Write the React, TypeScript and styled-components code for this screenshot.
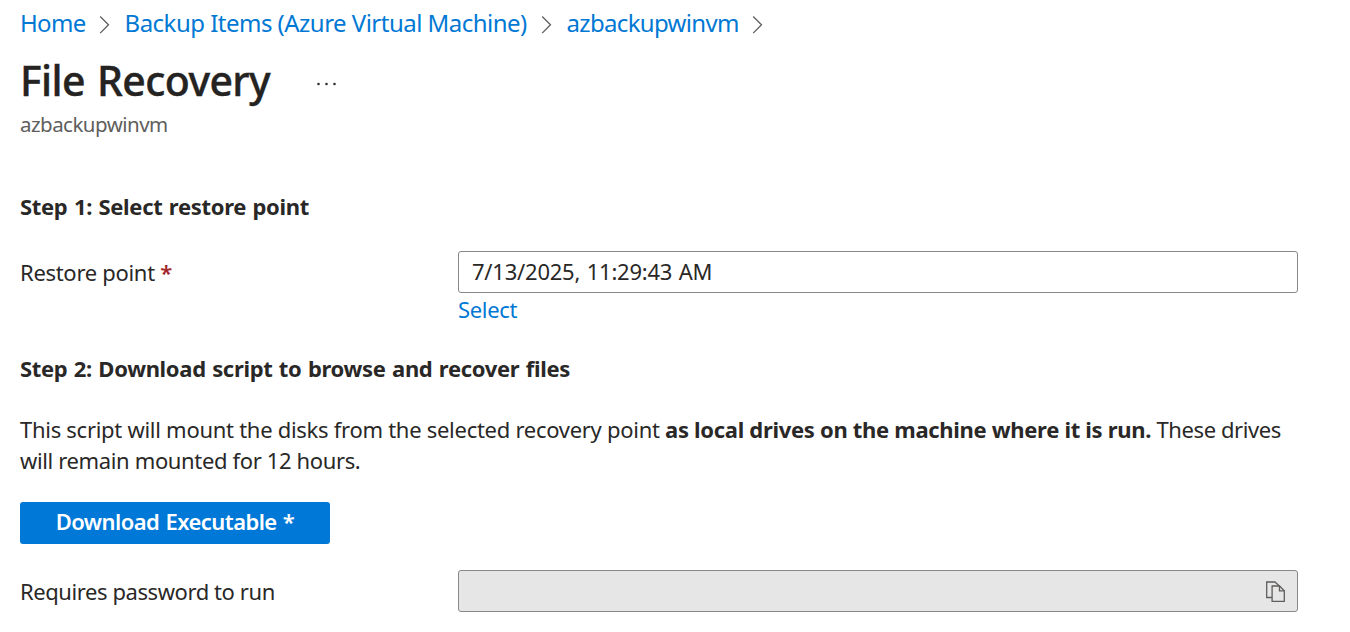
import React from "react";
import styled, { createGlobalStyle } from "styled-components";

const GlobalStyle = createGlobalStyle`
  * { box-sizing: border-box; }
  body {
    margin: 0;
    background: #fff;
    color: #292827;
    font-family: "Noto Sans", "Open Sans", sans-serif;
    font-size: 22px;
  }
`;

const Page = styled.main`
  display: flex;
  flex-direction: column;
  width: 1350px;
  height: 632px;
  padding: 0 52px 0 20px;
  overflow: hidden;
`;

const Text = styled.span<{ $spacing?: number; $word?: number }>`
  letter-spacing: ${(p) => p.$spacing ?? 0}px;
  word-spacing: ${(p) => p.$word ?? 0}px;
  white-space: pre;
`;

const Breadcrumb = styled.nav`
  display: flex;
  align-items: center;
  height: 45px;
  color: #0078d4;
  font-size: 24px;
`;

const Crumb = styled.a<{ $width: number; $spacing: number }>`
  width: ${(p) => p.$width}px;
  letter-spacing: ${(p) => p.$spacing}px;
  white-space: nowrap;
`;

const Separator = styled.svg<{ $gap: number }>`
  flex: none;
  width: 12px;
  height: 20px;
  margin: 4px ${(p) => p.$gap}px 0 13px;
`;

const TitleRow = styled.header`
  display: flex;
  align-items: center;
  height: 70px;
`;

const Title = styled.h1`
  width: 296px;
  margin: 0;
  color: #242322;
  font-size: 41px;
  font-weight: 500;
  line-height: 70px;
  letter-spacing: -0.6px;
  word-spacing: 2px;
  white-space: nowrap;
  -webkit-text-stroke: 0.4px #242322;
`;

const MoreIcon = styled.svg`
  width: 22px;
  height: 6px;
  margin-top: 7px;
`;

const Subtitle = styled.p`
  height: 30px;
  margin: -6px 0 0;
  color: #605e5c;
  font-size: 20.5px;
  line-height: 30px;
  letter-spacing: -0.53px;
`;

const StepHeading = styled.h2<{ $top: number; $spacing: number }>`
  height: 30px;
  margin: ${(p) => p.$top}px 0 0;
  font-size: 22px;
  font-weight: 700;
  line-height: 30px;
  letter-spacing: ${(p) => p.$spacing}px;
  word-spacing: 1px;
`;

const FieldRow = styled.div<{ $top: number }>`
  display: grid;
  grid-template-columns: 438px 840px;
  align-items: start;
  margin-top: ${(p) => p.$top}px;
`;

const Label = styled.label`
  line-height: 42px;
`;

const Required = styled(Text)`
  color: #a4262c;
  font-weight: 600;
`;

const Field = styled.div<{ $disabled?: boolean }>`
  display: flex;
  align-items: center;
  justify-content: space-between;
  height: 42px;
  padding: 0 11px 2px 13px;
  border: 1px solid #8a8886;
  border-radius: 3px;
  background: ${(p) => (p.$disabled ? "#e6e6e6" : "#fff")};
`;

const SelectLink = styled.a`
  display: block;
  height: 30px;
  margin-top: 1px;
  color: #0078d4;
  line-height: 30px;
`;

const Description = styled.p`
  margin: 31px 0 0;
  line-height: 31px;
`;

const Line = styled.span`
  display: block;
  white-space: pre;
`;

const Strong = styled.strong<{ $spacing: number }>`
  letter-spacing: ${(p) => p.$spacing}px;
`;

const DownloadButton = styled.button`
  width: 310px;
  height: 42px;
  margin-top: 26px;
  padding: 0 0 4px;
  border: 0;
  border-radius: 3px;
  background: #0078d7;
  color: #fff;
  font: 600 22px "Noto Sans", "Open Sans", sans-serif;
  letter-spacing: -0.55px;
  word-spacing: 1px;
`;

const CopyIcon = styled.svg`
  width: 20px;
  height: 22px;
  margin-top: 4px;
`;

function Chevron({ gap }: { gap: number }) {
  return (
    <Separator $gap={gap} viewBox="0 0 12 20" fill="none" stroke="#605e5c" strokeWidth="1.3">
      <path d="M1.2 1.5 9.5 9.8 1.2 18.1" />
    </Separator>
  );
}

export default function App() {
  return (
    <Page>
      <GlobalStyle />
      <Breadcrumb>
        <Crumb $width={66} $spacing={-0.7}>Home</Crumb>
        <Chevron gap={13.6} />
        <Crumb $width={403.4} $spacing={-0.52}>Backup Items (Azure Virtual Machine)</Crumb>
        <Chevron gap={13.6} />
        <Crumb $width={172.4} $spacing={-0.68}>azbackupwinvm</Crumb>
        <Chevron gap={0} />
      </Breadcrumb>
      <TitleRow>
        <Title>File Recovery</Title>
        <MoreIcon viewBox="0 0 22 6" fill="#323130">
          <circle cx="2.5" cy="3" r="1.3" />
          <circle cx="10.5" cy="3" r="1.3" />
          <circle cx="18.5" cy="3" r="1.3" />
        </MoreIcon>
      </TitleRow>
      <Subtitle>azbackupwinvm</Subtitle>
      <StepHeading $top={52} $spacing={-0.31}>Step 1: Select restore point</StepHeading>
      <FieldRow $top={30}>
        <Label>
          <Text $spacing={-0.3}>Restore point </Text>
          <Required>*</Required>
        </Label>
        <div>
          <Field>
            <Text $spacing={-0.22} $word={1}>7/13/2025, 11:29:43 AM</Text>
          </Field>
          <SelectLink><Text $spacing={-0.34}>Select</Text></SelectLink>
        </div>
      </FieldRow>
      <StepHeading $top={29} $spacing={-0.32}>Step 2: Download script to browse and recover files</StepHeading>
      <Description>
        <Line>
          <Text $spacing={-0.28}>This script will mount the disks from the selected recovery point </Text>
          <Strong $spacing={-0.31}>as local drives on the machine where it is run.</Strong>
          <Text $spacing={-0.4}> These drives</Text>
        </Line>
        <Line>
          <Text $spacing={-0.36}>will remain mounted for 12 hours.</Text>
        </Line>
      </Description>
      <DownloadButton>Download Executable *</DownloadButton>
      <FieldRow $top={26}>
        <Label><Text $spacing={-0.42}>Requires password to run</Text></Label>
        <Field $disabled>
          <span />
          <CopyIcon viewBox="0 0 20 22" fill="none" stroke="#605e5c" strokeWidth="1.3">
            <path d="M6.1 16.5H.7V1H9L13.5 5.3" />
            <path d="M6.1 5H13.5L18.3 9.8V20.4H6.1Z" />
            <path d="M13.5 5V9.8H18.3" />
          </CopyIcon>
        </Field>
      </FieldRow>
    </Page>
  );
}
